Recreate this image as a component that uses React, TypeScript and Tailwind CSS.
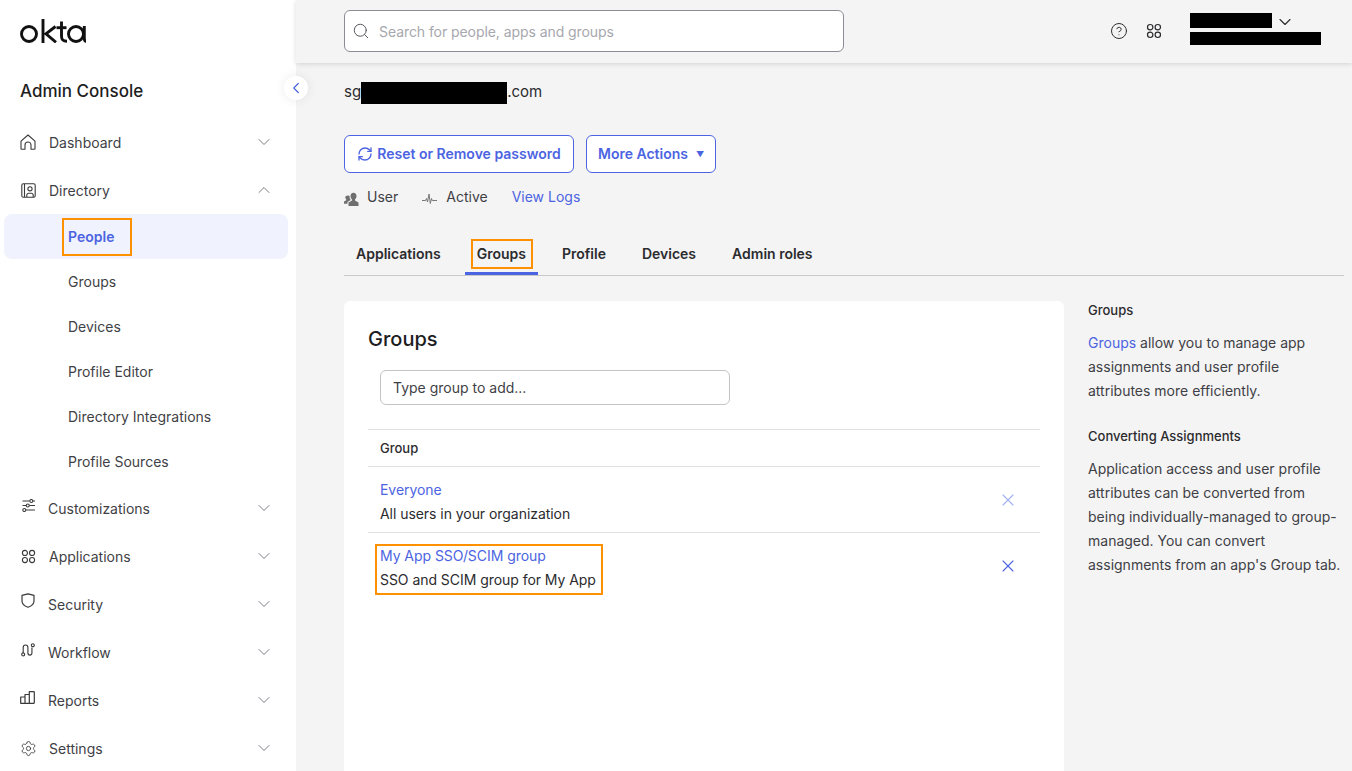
import { ChevronDown, ChevronLeft, ChevronUp, CircleHelp, RefreshCw, Search, Settings, X } from "lucide-react";
import type { ReactNode } from "react";

function AppsIcon({ size = 16 }: { size?: number }) {
  return (
    <svg width={size} height={size} viewBox="0 0 16 16" fill="none" stroke="currentColor" strokeWidth="1.2">
      <circle cx="4.2" cy="4.2" r="2.7" />
      <circle cx="11.8" cy="4.2" r="2.7" />
      <circle cx="4.2" cy="11.8" r="2.7" />
      <circle cx="11.8" cy="11.8" r="2.7" />
    </svg>
  );
}

function HomeIcon() {
  return (
    <svg width="16" height="16" viewBox="0 0 16 16" fill="none" stroke="currentColor" strokeWidth="1.1" strokeLinejoin="round">
      <path d="M1 7.200 8 1l7 6.200v7.600a.5.5 0 0 1-.5.5h-3.500v-4.300a3 3 0 0 0-6 0v4.300H1.500a.5.5 0 0 1-.5-.5z" />
    </svg>
  );
}

function DirectoryIcon() {
  return (
    <svg width="15" height="15" viewBox="0 0 15 15" fill="none" stroke="currentColor" strokeWidth="1.1">
      <rect x="0.800" y="0.800" width="13.400" height="13.400" rx="1.500" />
      <path d="M3.500 1v13" />
      <circle cx="9" cy="5.800" r="2.100" />
      <path d="M5.800 14v-1.800a2 2 0 0 1 2-2h2.400a2 2 0 0 1 2 2V14" />
    </svg>
  );
}

function SlidersIcon() {
  return (
    <svg width="13" height="13" viewBox="0 0 13 13" fill="none" stroke="currentColor" strokeWidth="1.1">
      <path d="M0.500 2h7M11 2h2M0.500 6.500h3.500M7.500 6.500h5.500M4 11h9" />
      <circle cx="9.300" cy="2" r="1.500" />
      <circle cx="5.800" cy="6.500" r="1.500" />
      <circle cx="2.300" cy="11" r="1.500" />
    </svg>
  );
}

function ShieldIcon() {
  return (
    <svg width="14" height="15" viewBox="0 0 14 15" fill="none" stroke="currentColor" strokeWidth="1.2" strokeLinejoin="round">
      <path d="M1 2.400 7 .8l6 1.600V8c0 3.200-2.800 5.200-6 6.300C3.800 13.200 1 11.200 1 8z" />
    </svg>
  );
}

function WorkflowIcon() {
  return (
    <svg width="14" height="14" viewBox="0 0 16 16" fill="none" stroke="currentColor" strokeWidth="1.300">
      <circle cx="2.500" cy="13" r="1.700" />
      <circle cx="13.500" cy="2.500" r="1.700" />
      <path d="M2.500 11.300V5a2.700 2.700 0 0 1 5.400 0v6.500a2.300 2.300 0 0 0 4.600 0V5" />
    </svg>
  );
}

function ReportsIcon() {
  return (
    <svg width="15" height="13" viewBox="0 0 15 13" fill="none" stroke="currentColor" strokeWidth="1.200" strokeLinejoin="round">
      <path d="M.7 6h4.300v6.300H.7zM5 3.500h4.300v8.800H5zM9.300.7h4.500a.5.5 0 0 1 .5.5v10.600a.5.5 0 0 1-.5.5H9.300z" />
    </svg>
  );
}

function OktaLogo() {
  return (
    <svg className="block" width="66" height="24" viewBox="0 0 66 24" fill="none" stroke="#111" strokeWidth="2.900">
      <circle cx="9" cy="15" r="7.500" />
      <path d="M23 0v24M35.500 7.500l-9.500 7.300 10 8.500" />
      <path d="M41.500 2.500v14.500c0 3.800 1.500 5.300 5.500 5.300" />
      <path d="M36.500 8.700h10" />
      <circle cx="56" cy="15" r="7.500" />
      <path d="M64.300 7v12c0 2.500.7 3.300 1.700 3.300" />
    </svg>
  );
}

function UserGlyph() {
  return (
    <svg className="mt-[5px]" width="15" height="14" viewBox="0 0 15 14" fill="#6f6f6f">
      <path d="M9.500 0.800c1.900 0 3 1.400 3 3.300 0 1.300-.6 2.600-1.500 3.300v1l3.500 2V14H4.500v-3.600l3.500-2v-1C7.100 6.700 6.500 5.400 6.500 4.100c0-1.900 1.100-3.300 3-3.300z" />
      <path d="M4 3.500c.7 0 1.200.2 1.600.6-.2 1.300.2 2.700 1 3.700v.3L3.500 10v1.800H0V9.500l2.300-1.300v-.7C1.700 7 1.300 6 1.300 5.300 1.300 4.200 2.400 3.500 4 3.500z" />
    </svg>
  );
}

function PulseGlyph() {
  return (
    <svg className="mt-1" width="15" height="11" viewBox="0 0 15 11" fill="none" stroke="#777" strokeWidth="1">
      <path d="M0 7.500h3.500l1-2 1 3.500 1.500-8 1.300 9.500 1.200-5 .8 2h4.700" />
    </svg>
  );
}

function NavItem({ icon, label, open, iconClass }: { icon: ReactNode; label: string; open?: boolean; iconClass: string }) {
  return (
    <div className="flex h-12 items-center pl-5 pr-[22px] text-[14px] text-[#3f3f46]">
      <span className={`flex shrink-0 text-[#3a3a3a] ${iconClass}`}>{icon}</span>
      <span className="flex-1">{label}</span>
      {open ? (
        <ChevronUp size={20} strokeWidth={1.1} className="-mt-[1px] text-[#6e6e78]" />
      ) : (
        <ChevronDown size={20} strokeWidth={1.1} className="-mt-[1px] text-[#6e6e78]" />
      )}
    </div>
  );
}

function SubItem({ label }: { label: string }) {
  return <div className="flex h-[45px] items-center pl-[68px] text-[14px] text-[#3f3f46]">{label}</div>;
}

function Tab({ label, active }: { label: string; active?: boolean }) {
  if (active) {
    return (
      <div className="flex h-[43px] border-b-[3px] border-[#4c64e1] pl-[6px] pr-[5px] pt-1 text-[14px] font-semibold text-[#2b2b2e]">
        <span className="self-center border-2 border-[#ff9100] pl-1 pr-[5px] py-[3px] leading-5">{label}</span>
      </div>
    );
  }
  return <div className="flex h-[43px] items-center px-3 text-[14px] font-semibold text-[#2b2b2e]">{label}</div>;
}

function Sidebar() {
  return (
    <aside className="flex h-[771px] w-[296px] shrink-0 flex-col bg-white">
      <div className="pl-5 pt-[19px]">
        <OktaLogo />
      </div>
      <h2 className="pl-5 pt-[35px] text-[17px] leading-[26px] font-medium text-[#1d1d21]">Admin Console</h2>
      <nav className="pt-[14px]">
        <NavItem icon={<HomeIcon />} label="Dashboard" iconClass="w-[29px]" />
        <NavItem icon={<DirectoryIcon />} label="Directory" open iconClass="w-[29px] pl-[1px]" />
        <div className="ml-1 mr-2 flex h-[45px] items-center rounded-lg bg-[#f0f3fd] pl-[58px]">
          <span className="flex h-[38px] w-[70px] items-center border-2 border-[#ff9100] pl-1 text-[14px] font-semibold text-[#4c64e1]">People</span>
        </div>
        <SubItem label="Groups" />
        <SubItem label="Devices" />
        <SubItem label="Profile Editor" />
        <SubItem label="Directory Integrations" />
        <SubItem label="Profile Sources" />
        <NavItem icon={<SlidersIcon />} label="Customizations" iconClass="-mt-[6px] w-[28px] pl-[2px]" />
        <NavItem icon={<AppsIcon size={15} />} label="Applications" iconClass="w-[29px] pl-[1px]" />
        <NavItem icon={<ShieldIcon />} label="Security" iconClass="-mt-2 w-[28px] pl-[1px]" />
        <NavItem icon={<WorkflowIcon />} label="Workflow" iconClass="-mt-[5px] w-[28px] pl-[1px]" />
        <NavItem icon={<ReportsIcon />} label="Reports" iconClass="-mt-[6px] w-[28px]" />
        <NavItem icon={<Settings size={17} strokeWidth={1.2} />} label="Settings" iconClass="w-[29px]" />
      </nav>
    </aside>
  );
}

function Header() {
  return (
    <header className="flex h-[63px] items-center bg-[#f4f4f4] pb-[1px] pl-12 pr-[31px] shadow-[0_1px_5px_rgba(0,0,0,0.14)]">
      <div className="flex h-[42px] w-[500px] items-center gap-[9px] rounded-md border border-[#8c8c96] bg-white pl-[7px] text-[14px] tracking-[-0.07px] text-[#a7a7ae]">
        <Search size={18} strokeWidth={1.3} className="text-[#55555c]" />
        Search for people, apps and groups
      </div>
      <div className="ml-auto flex items-center text-[#2b2b2e]">
        <CircleHelp size={18} strokeWidth={1.3} />
        <span className="ml-[18px]">
          <AppsIcon />
        </span>
        <div className="-mt-1 ml-[28px] flex w-[131px] flex-col gap-1">
          <div className="flex h-[15px] items-center gap-[3px]">
            <div className="h-[15px] w-[82px] bg-black" />
            <ChevronDown size={20} strokeWidth={1.3} className="mt-[3px]" />
          </div>
          <div className="h-[13px] w-[131px] bg-black" />
        </div>
      </div>
    </header>
  );
}

function GroupRow({ title, desc, strong, mark }: { title: string; desc: string; strong?: boolean; mark?: boolean }) {
  const text = (
    <>
      <div className="text-[#4c64e1]">{title}</div>
      <div className="mt-1 text-[#2b2b2e]">{desc}</div>
    </>
  );
  return (
    <div className="flex h-[66px] items-center border-b border-[#e1e1e1] pl-3 text-[14px] leading-5 tracking-[-0.05px] last:border-b-0">
      {mark ? (
        <div className="flex-1 pt-[6px]">
          <div className="-ml-[5px] w-[228px] border-2 border-[#ff9100] pb-[3px] pl-[3px]">{text}</div>
        </div>
      ) : (
        <div className="flex-1 pt-[5px]">{text}</div>
      )}
      <X size={20} strokeWidth={1.3} className={`mr-[22px] ${strong ? "text-[#4c64e1]" : "text-[#a3afee]"}`} />
    </div>
  );
}

function GroupsCard() {
  return (
    <section className="h-[470px] w-[720px] shrink-0 rounded-t-md bg-white px-6 pt-[24px]">
      <h3 className="text-[20px] leading-7 font-medium text-[#1d1d21]">Groups</h3>
      <div className="ml-3 mt-[17px] flex h-[35px] w-[350px] items-center rounded-md border border-[#c4c4c4] pl-3 text-[14px] text-[#3f3f46]">
        Type group to add...
      </div>
      <div className="mt-[24px] border-t border-[#e1e1e1]">
        <div className="flex h-[37px] items-center border-b border-[#e1e1e1] pl-3 pt-[2px] text-[13px] font-medium text-[#2b2b2e]">Group</div>
        <GroupRow title="Everyone" desc="All users in your organization" />
        <GroupRow title="My App SSO/SCIM group" desc="SSO and SCIM group for My App" strong mark />
      </div>
    </section>
  );
}

function HelpPanel() {
  return (
    <aside className="-mt-[1px] w-[256px] text-[14px] leading-6 text-[#3f3f46]">
      <h4 className="text-[13px] leading-5 font-medium text-[#2b2b2e]">Groups</h4>
      <p className="mt-[11px]">
        <span className="text-[#4c64e1]">Groups</span> allow you to manage app assignments and user profile attributes more efficiently.
      </p>
      <h4 className="mt-[23px] text-[13px] leading-5 font-medium text-[#2b2b2e]">Converting Assignments</h4>
      <p className="mt-[11px]">
        Application access and user profile attributes can be converted from being individually-managed to group-managed. You can convert assignments from an app's Group tab.
      </p>
    </aside>
  );
}

export default function App() {
  return (
    <div className="relative flex h-[771px] w-[1352px] overflow-hidden bg-[#f4f4f4] font-['Inter',sans-serif]">
      <Sidebar />
      <button className="absolute left-[284px] top-[76px] z-10 flex h-6 w-6 items-center justify-center rounded-full bg-white text-[#4c64e1] shadow-[0_0_12px_rgba(0,0,0,0.08)]">
        <ChevronLeft size={18} strokeWidth={1.6} />
      </button>
      <div className="min-w-0 flex-1">
        <Header />
        <main className="pl-12 pr-2">
          <div className="mt-[19px] flex h-[22px] items-center pb-[2px] text-[15px] text-[#2b2b2e]">
            sg
            <span className="h-[22px] w-[146px] self-start bg-black" />
            .com
          </div>
          <div className="mt-[31px] flex gap-3 text-[14px] font-semibold text-[#4c64e1]">
            <button className="flex h-[38px] w-[230px] items-center justify-center gap-1 rounded-md border border-[#4c64e1] bg-white pb-[1px]">
              <RefreshCw size={16} strokeWidth={2} />
              Reset or Remove password
            </button>
            <button className="flex h-[38px] w-[130px] items-center gap-2 rounded-md border border-[#4c64e1] bg-white pb-[1px] pl-[11px]">
              More Actions <span className="text-[8px]">▼</span>
            </button>
          </div>
          <div className="mt-[13px] flex h-5 items-center text-[14px] text-[#3f3f46]">
            <UserGlyph />
            <span className="ml-2">User</span>
            <span className="ml-6">
              <PulseGlyph />
            </span>
            <span className="ml-[9px]">Active</span>
            <span className="ml-6 text-[#4c64e1]">View Logs</span>
          </div>
          <div className="mt-[26px] flex h-[44px] gap-3 border-b border-[#c9c9c9]">
            <Tab label="Applications" />
            <Tab label="Groups" active />
            <Tab label="Profile" />
            <Tab label="Devices" />
            <Tab label="Admin roles" />
          </div>
          <div className="mt-[25px] flex gap-6">
            <GroupsCard />
            <HelpPanel />
          </div>
        </main>
      </div>
    </div>
  );
}
